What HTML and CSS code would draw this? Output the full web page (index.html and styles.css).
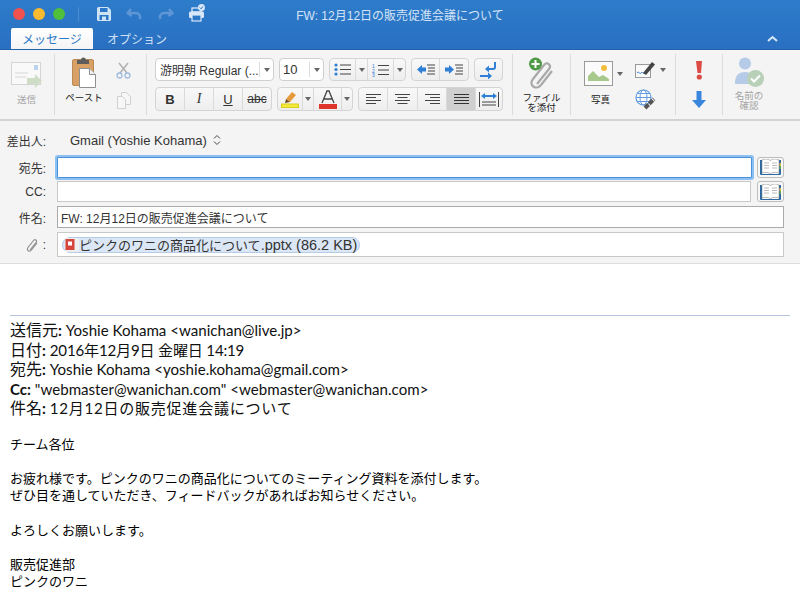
FILE: index.html
```html
<!DOCTYPE html>
<html lang="ja">
<head>
<meta charset="utf-8">
<title>FW: 12月12日の販売促進会議について</title>
<link rel="stylesheet" href="styles.css">
</head>
<body>
<header class="titlebar">
  <div class="title-row">
    <div class="quick">
      <span class="light red"></span><span class="light yellow"></span><span class="light green"></span>
      <span class="quick-sep"></span>
      <svg class="qi save" width="16" height="16" viewBox="0 0 16 16"><path d="M1 2.500A1.500 1.500 0 0 1 2.500 1h9.500L15 4v9.500a1.500 1.500 0 0 1-1.500 1.500h-11A1.500 1.500 0 0 1 1 13.500z" fill="#cfe3f7"/><rect x="4" y="2" width="7.500" height="4" fill="#2b78c8"/><rect x="3.500" y="9" width="9" height="5" fill="#2b78c8"/><rect x="6" y="10.500" width="4" height="3.500" fill="#cfe3f7"/></svg>
      <svg class="qi undo" width="16" height="14" viewBox="0 0 16 14"><path d="M5 2 1.500 6 5.500 9M2.500 6H10a4 4 0 0 1 3.500 6" fill="none" stroke="#5f97d6" stroke-width="2.400"/></svg>
      <svg class="qi redo" width="16" height="14" viewBox="0 0 16 14"><path d="M11 2l3.500 4-4 3M13.500 6H6a4 4 0 0 0-3.500 6" fill="none" stroke="#5f97d6" stroke-width="2.400"/></svg>
      <svg class="qi print" width="18" height="18" viewBox="0 0 18 18"><rect x="4" y="4" width="9" height="4" fill="none" stroke="#d8e7f8" stroke-width="1.300"/><rect x="1" y="7.500" width="15" height="6.500" rx="1.500" fill="#d8e7f8"/><rect x="4" y="11" width="9" height="6" fill="#2b78c8" stroke="#d8e7f8" stroke-width="1.200"/><circle cx="13.500" cy="3.500" r="3.500" fill="#d8e7f8"/><path d="M11.800 3.500l1.300 1.300 2-2.400" fill="none" stroke="#2b78c8" stroke-width="1"/></svg>
    </div>
    <div class="title-text">FW: 12月12日の販売促進会議について</div>
    <div class="quick-end"></div>
  </div>
  <div class="tab-row">
    <div class="tab active">メッセージ</div>
    <div class="tab">オプション</div>
    <svg class="collapse" width="11" height="7" viewBox="0 0 11 7"><path d="M1 6l4.500-4L10 6" fill="none" stroke="#d9e8f8" stroke-width="2"/></svg>
  </div>
</header>

<section class="ribbon">
  <div class="group g-send">
    <svg width="32" height="30" viewBox="0 0 32 30"><rect x="0.500" y="2.500" width="29" height="22" fill="#f9f9f9" stroke="#d4d4d4"/><rect x="23" y="5" width="4" height="5" fill="#bcd2ee"/><path d="M4 13h13M4 17h11" stroke="#d6d6d6"/><path d="M16 18h8v-4l7 7-7 7v-4h-8z" fill="#cfdcc6"/></svg>
    <span class="big-label dim">送信</span>
  </div>
  <div class="group g-paste">
    <div class="paste-col">
      <svg width="24" height="31" viewBox="0 0 24 31"><rect x="0.500" y="2.500" width="21" height="26" rx="1.500" fill="#d9a066" stroke="#b98a55"/><path d="M5 7V3h4a2.500 2.500 0 0 1 5 0h3v4z" fill="#5d5d5d"/><path d="M7.500 11.500h10l6 6v13h-16z" fill="#fff" stroke="#8f8f8f"/><path d="M17.500 11.500v6h6" fill="#eee" stroke="#8f8f8f"/></svg>
      <span class="big-label dark">ペースト</span>
    </div>
    <div class="paste-small">
      <svg width="15" height="17" viewBox="0 0 15 17"><path d="M3 1l8 10M12 1 4 11" stroke="#b3b3b3" stroke-width="1.600"/><circle cx="3.500" cy="13.500" r="2.500" fill="none" stroke="#9dbbe0" stroke-width="1.300"/><circle cx="11.500" cy="13.500" r="2.500" fill="none" stroke="#9dbbe0" stroke-width="1.300"/></svg>
      <svg width="14" height="17" viewBox="0 0 14 17"><path d="M4.500.5h5l4 4v8h-9z" fill="#f7f7f7" stroke="#d0d0d0"/><path d="M.5 4.500h5l3 3v9h-8z" fill="#f7f7f7" stroke="#d0d0d0"/></svg>
    </div>
  </div>
  <div class="group g-format">
    <div class="frow first">
      <div class="select w-font"><span class="sel-text">游明朝 Regular (...</span><span class="sel-arrow"><i class="tri"></i></span></div>
      <div class="select w-size"><span class="sel-text">10</span><span class="sel-arrow"><i class="tri"></i></span></div>
      <div class="btns">
        <span class="b w26"><svg width="17" height="13" viewBox="0 0 17 13"><g fill="#2f7fd6"><circle cx="2" cy="2" r="1.600"/><circle cx="2" cy="6.500" r="1.600"/><circle cx="2" cy="11" r="1.600"/></g><path d="M6 2h11M6 6.500h11M6 11h11" stroke="#444"/></svg></span>
        <span class="b w12"><i class="tri"></i></span>
        <span class="b w26"><svg width="17" height="14" viewBox="0 0 17 14"><g fill="#2f7fd6" font-size="5" font-family="Liberation Sans, sans-serif"><text x="0" y="4.500">1</text><text x="0" y="9.500">2</text><text x="0" y="14">3</text></g><path d="M6 2.500h11M6 7h11M6 11.500h11" stroke="#444"/></svg></span>
        <span class="b w11"><i class="tri"></i></span>
      </div>
      <div class="btns">
        <span class="b w28"><svg width="18" height="11" viewBox="0 0 18 11"><path d="M0 5.500 5 1v2.500h4v4H5V10z" fill="#2f7fd6"/><path d="M10 1h8M11 4h7M11 7h7M10 10h8" stroke="#444"/></svg></span>
        <span class="b w28"><svg width="18" height="11" viewBox="0 0 18 11"><path d="M9 5.500 4 1v2.500H0v4h4V10z" fill="#2f7fd6"/><path d="M10 1h8M11 4h7M11 7h7M10 10h8" stroke="#444"/></svg></span>
      </div>
      <div class="btns">
        <span class="b w27"><svg width="20" height="18" viewBox="0 0 20 18"><path d="M16 1v5a2 2 0 0 1-2 2H7" fill="none" stroke="#2f7fd6" stroke-width="2"/><path d="M6 8l4-3.500v7z" fill="#2f7fd6"/><path d="M1 15h9" stroke="#2f7fd6" stroke-width="2"/><path d="M13 15l-4-3.500v7z" fill="#2f7fd6"/></svg></span>
      </div>
    </div>
    <div class="frow second">
      <div class="btns">
        <span class="b w29 tb bold">B</span>
        <span class="b w29 tb ital">I</span>
        <span class="b w29 tb under">U</span>
        <span class="b w28 tb strike">abc</span>
      </div>
      <div class="btns">
        <span class="b w25"><svg width="18" height="18" viewBox="0 0 18 18"><path d="M5 9l6-7 4 3-6 7z" fill="#e69a3c"/><path d="M5 9l4 3-5 1z" fill="#6b4a20"/><rect x="0.500" y="14" width="17" height="3.500" fill="#f5ec3a" stroke="#d9ce1f"/></svg></span>
        <span class="b w11"><i class="tri"></i></span>
        <span class="b w28"><svg class="afont" width="18" height="19" viewBox="0 0 18 19"><path d="M3 13 8 1h2l5 12M5 9h8" fill="none" stroke="#444" stroke-width="1.300"/><rect x="0" y="14" width="18" height="5" fill="#e0352b"/></svg></span>
        <span class="b w10"><i class="tri"></i></span>
      </div>
      <div class="btns">
        <span class="b w29"><svg width="15" height="11" viewBox="0 0 15 11"><path d="M0 .500h15M0 3.500h10M0 6.500h15M0 9.500h10" stroke="#444"/></svg></span>
        <span class="b w30"><svg width="15" height="11" viewBox="0 0 15 11"><path d="M0 .500h15M2.500 3.500h10M0 6.500h15M2.500 9.500h10" stroke="#444"/></svg></span>
        <span class="b w29"><svg width="15" height="11" viewBox="0 0 15 11"><path d="M0 .500h15M5 3.500h10M0 6.500h15M5 9.500h10" stroke="#444"/></svg></span>
        <span class="b w29 on"><svg width="15" height="11" viewBox="0 0 15 11"><path d="M0 .500h15M0 3.500h15M0 6.500h15M0 9.500h15" stroke="#333"/></svg></span>
        <span class="b w26"><svg width="20" height="15" viewBox="0 0 20 15"><path d="M.5 0v15M19.500 0v15" stroke="#444"/><path d="M2 4l4-3v2h8V1l4 3-4 3V5H6v2z" fill="#2f7fd6"/><path d="M3 10h14M3 13h14" stroke="#444"/></svg></span>
      </div>
    </div>
  </div>
  <div class="group g-attach">
    <svg width="27" height="33" viewBox="0 0 27 33"><path d="M9 27 21 12c3-4-2-8-5-4L5 22c-5 6 3 12 8 6l11-14" fill="none" stroke="#a9a9a9" stroke-width="2.200"/><circle cx="7.500" cy="7" r="6.500" fill="#4e9a47"/><path d="M3.500 7h8M7.500 3v8" stroke="#fff" stroke-width="2"/></svg>
    <span class="two-label dark">ファイル<br>を添付</span>
  </div>
  <div class="group g-pics">
    <div class="pic-col">
      <div class="pic-top">
        <svg width="29" height="25" viewBox="0 0 29 25"><rect x="0.500" y="0.500" width="28" height="24" fill="#fbfbfb" stroke="#9a9a9a"/><circle cx="20" cy="7" r="3" fill="#f1bd3d"/><path d="M4 20V15l5-5 6 6 4-2 6 4v2z" fill="#a7c98c"/></svg>
        <i class="tri"></i>
      </div>
      <span class="big-label dark pic-label">写真</span>
    </div>
    <div class="pic-col2">
      <div class="pic-top">
        <svg width="21" height="17" viewBox="0 0 21 17"><rect x="0.500" y="3.500" width="15" height="13" fill="#fafafa" stroke="#9a9a9a"/><path d="M2 12c2-3 2 2 4 0s1 1 3 0" fill="none" stroke="#2f7fd6"/><path d="M8 12l9-11 3 2.500L11 14z" fill="#444"/></svg>
        <i class="tri"></i>
      </div>
      <svg class="link-ic" width="21" height="21" viewBox="0 0 21 21"><circle cx="8.500" cy="8.500" r="7.500" fill="#fff" stroke="#5e9be0" stroke-width="1.200"/><ellipse cx="8.500" cy="8.500" rx="3.500" ry="7.500" fill="none" stroke="#5e9be0"/><path d="M1 8.500h15M2.500 4.500h12M2.500 12.500h12" stroke="#5e9be0"/><path d="M10 19l9-9" stroke="#555" stroke-width="4" stroke-dasharray="5 1"/></svg>
    </div>
  </div>
  <div class="group g-flags">
    <svg width="7" height="19" viewBox="0 0 7 19"><path d="M0 0h6L5 12H1.500z" fill="#dc4a44"/><circle cx="3.300" cy="16" r="2.600" fill="#dc4a44"/></svg>
    <svg width="14" height="17" viewBox="0 0 14 17"><path d="M4.500 0h5v9H14l-7 8-7-8h4.500z" fill="#3a86dc"/></svg>
  </div>
  <div class="group g-names">
    <svg width="30" height="31" viewBox="0 0 30 31"><circle cx="11" cy="6.500" r="6" fill="#b5cbe8"/><path d="M1 27c0-8 3-12 10-12 4 0 6 2 7 4-3 2-4 5-3 8z" fill="#b5cbe8"/><circle cx="21.500" cy="21.500" r="8.500" fill="#b8d0b8"/><path d="M17 21.500l3 3 6-6" fill="none" stroke="#fff" stroke-width="2"/></svg>
    <span class="two-label dim">名前の<br>確認</span>
  </div>
</section>

<section class="fields">
  <div class="row-from">
    <span class="lab">差出人:</span>
    <span class="from-val">Gmail (Yoshie Kohama)</span>
    <svg width="8" height="12" viewBox="0 0 8 12"><path d="M1 4.500 4 1.500l3 3M1 7.500l3 3 3-3" fill="none" stroke="#444"/></svg>
  </div>
  <div class="row row-to">
    <span class="lab">宛先:</span>
    <div class="input focus"></div>
    <span class="book"><svg width="21" height="16" viewBox="0 0 21 16"><path d="M0 1h2v14h17V1h2v14a1 1 0 0 1-1 1H1a1 1 0 0 1-1-1z" fill="#2d6aa5"/><path d="M2 1c3-1.500 6-1 8.500.5C13-.5 16-.5 19 1v13c-3-1-6-1-8.500 .5C8 13 5 13 2 14z" fill="#fff" stroke="#777" stroke-width=".5"/><path d="M4 4h5M4 6.500h5M4 9h5M12 4h5M12 6.500h5M12 9h5" stroke="#bbb"/><path d="M19.500 4h1.500v3h-1.500z" fill="#e2b53a"/><path d="M19.500 7h1.500v3h-1.500z" fill="#62a65a"/></svg></span>
  </div>
  <div class="row row-cc">
    <span class="lab">CC:</span>
    <div class="input plain"></div>
    <span class="book"><svg width="21" height="16" viewBox="0 0 21 16"><path d="M0 1h2v14h17V1h2v14a1 1 0 0 1-1 1H1a1 1 0 0 1-1-1z" fill="#2d6aa5"/><path d="M2 1c3-1.500 6-1 8.500.5C13-.5 16-.5 19 1v13c-3-1-6-1-8.500 .5C8 13 5 13 2 14z" fill="#fff" stroke="#777" stroke-width=".5"/><path d="M4 4h5M4 6.500h5M4 9h5M12 4h5M12 6.500h5M12 9h5" stroke="#bbb"/><path d="M19.500 4h1.500v3h-1.500z" fill="#e2b53a"/><path d="M19.500 7h1.500v3h-1.500z" fill="#62a65a"/></svg></span>
  </div>
  <div class="row row-subj">
    <span class="lab">件名:</span>
    <div class="input subj">FW: 12月12日の販売促進会議について</div>
  </div>
  <div class="row row-att">
    <span class="lab att-lab"><svg width="12" height="14" viewBox="0 0 12 14"><path d="M4 12 10 4.500c1.500-2-1-4-2.500-2L2 9.500c-2 3 1.500 5 3.500 2.500L11 5" fill="none" stroke="#8a8a8a" stroke-width="1.100"/></svg><span>:</span></span>
    <div class="input att">
      <span class="chip"><svg width="14" height="14" viewBox="0 0 14 14"><rect width="14" height="14" rx="1" fill="#eeeeee"/><rect x="0.500" y="1" width="9" height="11" fill="#d6453b"/><path d="M3 3.500h4v4H3z" fill="#fff"/></svg><span>ピンクのワニの商品化について<span class="chip-latin">.pptx (86.2 KB)</span></span></span>
    </div>
  </div>
</section>

<main class="mail">
  <div class="meta">
    <p><span class="k">送信元</span><b>:</b> Yoshie Kohama &lt;wanichan@live.jp&gt;</p>
    <p><span class="k">日付</span><b>:</b> <span class="m-date">2016年12月9日 金曜日 14:19</span></p>
    <p><span class="k">宛先</span><b>:</b> Yoshie Kohama &lt;yoshie.kohama@gmail.com&gt;</p>
    <p><b>Cc:</b> "webmaster@wanichan.com" &lt;webmaster@wanichan.com&gt;</p>
    <p><span class="k">件名</span><b>:</b> <span class="m-subj">12月12日の販売促進会議について</span></p>
  </div>
  <div class="message">
    <p>チーム各位</p>
    <p>お疲れ様です。ピンクのワニの商品化についてのミーティング資料を添付します。<br>ぜひ目を通していただき、フィードバックがあればお知らせください。</p>
    <p>よろしくお願いします。</p>
    <p>販売促進部<br>ピンクのワニ</p>
  </div>
</main>
</body>
</html>
```
FILE: styles.css
```css
* { box-sizing: border-box; }
html, body { margin: 0; height: 600px; overflow: hidden; }
body { background: #fff; font-family: "Liberation Sans", "Noto Sans CJK JP", sans-serif; color: #333; font-size: 12px; }

/* title bar */
.titlebar { height: 50px; background: linear-gradient(#2d7cca, #2a6fc1); border-bottom: 1px solid #2163aa; }
.title-row { height: 28px; display: grid; grid-template-columns: 1fr auto 1fr; align-items: center; }
.quick { display: flex; align-items: center; padding-left: 13px; }
.light { width: 12px; height: 12px; border-radius: 50%; margin-right: 8px; }
.light.red { background: #f1524d; }
.light.yellow { background: #fbbb2f; }
.light.green { background: #4fc03c; }
.quick-sep { width: 1px; height: 15px; background: #4a8ad0; margin: 0 17px 0 5px; }
.qi { display: block; flex: none; }
.undo { margin-left: 14px; }
.redo { margin-left: 16px; }
.print { margin-left: 14px; margin-top: -3px; }
.title-text { color: #d5e4f6; font-size: 12px; }
.tab-row { height: 21px; display: flex; align-items: stretch; padding-left: 11px; padding-right: 22px; }
.tab { width: 82px; display: flex; align-items: center; justify-content: center; font-size: 12px; color: #cfe0f5; }
.tab.active { background: linear-gradient(#fff, #f4f4f4); color: #2b78c8; border-radius: 2px 2px 0 0; margin-right: 3px; }
.collapse { margin-left: auto; align-self: center; }

/* ribbon */
.ribbon { height: 71px; background: #f4f4f4; border-bottom: 2px solid #d2d2d2; display: flex; }
.group { height: 61px; margin-top: 4px; border-right: 1px solid #dcdcdc; flex: none; }
.big-label { font-size: 9.500px; line-height: 12px; white-space: nowrap; }
.two-label { font-size: 9.500px; line-height: 10px; text-align: center; display: block; white-space: nowrap; }
.dim { color: #a3a3a3; }
.dark { color: #222; }

.g-send { width: 55px; display: flex; flex-direction: column; align-items: center; padding-top: 6px; padding-right: 1px; }
.g-send .big-label { margin-top: 4px; }
.g-paste { width: 92px; display: flex; padding-left: 9px; }
.paste-col { width: 40px; display: flex; flex-direction: column; align-items: center; padding-top: 3px; }
.paste-col .big-label { margin-top: 4px; }
.paste-small { margin-left: 12px; display: flex; flex-direction: column; gap: 13px; padding-top: 8px; align-items: center; }

.g-format { width: 366px; padding-left: 8px; }
.frow { display: flex; gap: 5px; }
.frow.first { height: 23px; margin-top: 4px; }
.frow.second { height: 24px; margin-top: 6px; }
.select { height: 23px; background: #fff; border: 1px solid #cfcfcf; border-radius: 4px; display: flex; align-items: center; font-size: 12px; color: #333; }
.w-font { width: 119px; }
.w-size { width: 45px; }
.sel-text { flex: 1; padding-left: 4px; white-space: nowrap; overflow: hidden; }
.w-size .sel-text { padding-left: 3px; font-size: 13px; }
.sel-arrow { width: 14px; height: 15px; border-left: 1px solid #dcdcdc; display: flex; align-items: center; justify-content: center; }
.tri { display: block; width: 0; height: 0; border-left: 3.500px solid transparent; border-right: 3.500px solid transparent; border-top: 4px solid #666; }
.btns { display: flex; border: 1px solid #d4d4d4; border-radius: 4px; background: linear-gradient(#f8f8f8, #eeeeee); }
.b { display: flex; align-items: center; justify-content: center; border-right: 1px solid #dadada; flex: none; }
.b:last-child { border-right: 0; }
.b.on { background: #cfcfcf; }
.w10 { width: 10px; }
.w11 { width: 11px; }
.w12 { width: 12px; }
.w25 { width: 25px; }
.w26 { width: 26px; }
.w27 { width: 27px; }
.w28 { width: 28px; }
.w29 { width: 29px; }
.w30 { width: 30px; }
.tb { font-size: 13px; color: #333; }
.bold { font-weight: 700; }
.ital { font-style: italic; font-family: "Liberation Serif", serif; font-size: 14px; }
.under { text-decoration: underline; font-size: 13px; }
.strike { text-decoration: line-through; font-size: 12px; }
.afont { display: block; }

.g-attach { width: 58px; display: flex; flex-direction: column; align-items: center; padding-top: 3px; }
.g-attach .two-label { margin-top: 3px; }
.g-pics { width: 105px; display: flex; padding-left: 13px; }
.pic-top { display: flex; align-items: center; gap: 4px; }
.pic-col { width: 51px; padding-top: 7px; }
.pic-label { display: block; margin-top: 8px; padding-left: 7px; }
.pic-col2 { padding-top: 7px; display: flex; flex-direction: column; gap: 11px; }
.link-ic { display: block; }
.g-flags { width: 47px; display: flex; flex-direction: column; align-items: center; padding-top: 7px; gap: 11px; }
.g-names { width: 77px; border-right: 0; display: flex; flex-direction: column; align-items: center; padding-top: 3px; padding-right: 25px; }
.g-names .two-label { margin-top: 3px; }

/* fields */
.fields { background: #f4f4f4; height: 143px; padding-top: 10px; border-bottom: 1px solid #dddddd; }
.lab { width: 46px; flex: none; text-align: right; font-size: 12px; color: #333; }
.row-from { display: flex; align-items: center; height: 18px; }
.from-val { margin-left: 24px; margin-right: 6px; font-size: 13px; color: #333; }
.row { display: flex; align-items: center; }
.input { background: #fff; margin-left: 11px; font-size: 12px; color: #333; display: flex; align-items: center; padding-left: 3px; }
.row-to { height: 22px; margin-top: 7px; }
.focus { width: 695px; height: 21px; border: 1px solid #4a90d9; box-shadow: 0 0 0 2px #8cc0f3; border-radius: 1px; }
.book { width: 27px; height: 21px; margin-left: 5px; border: 1px solid #bdbdbd; border-radius: 3px; background: #f7f7f7; display: flex; align-items: center; justify-content: center; }
.row-cc { height: 21px; margin-top: 3px; }
.plain { width: 694px; height: 21px; border: 1px solid #c8c8c8; }
.row-cc .book { margin-left: 6px; }
.row-subj { height: 22px; margin-top: 4px; }
.subj { width: 727px; height: 22px; border: 1px solid #ababab; }
.row-att { height: 25px; margin-top: 4px; }
.att { width: 727px; height: 25px; border: 1px solid #c8c8c8; padding-left: 4px; }
.att-lab { display: flex; justify-content: flex-end; align-items: center; gap: 5px; }
.chip { background: #dce7f6; border: 1px solid #b5cbe8; border-radius: 8px; height: 16px; display: inline-flex; align-items: center; gap: 0; padding: 0 2px; font-size: 13px; color: #333; white-space: nowrap; }
.chip-latin { font-size: 14.500px; line-height: 0; }

/* message */
.mail { padding: 51px 10px 0; }
.meta { border-top: 1px solid #b5c4df; padding-top: 5px; font-family: Lato, "Noto Sans CJK JP", sans-serif; font-size: 15.100px; line-height: 19.600px; color: #111; }
.meta p { margin: 0; white-space: nowrap; }
.meta b { font-weight: 700; }
.k { font-size: 16px; line-height: 0; }
.m-date { letter-spacing: -0.2px; }
.m-subj { letter-spacing: 0.7px; }
.message { margin-top: 17px; font-size: 13px; line-height: 17px; color: #000; }
.message p { margin: 0 0 17.300px; }
```
